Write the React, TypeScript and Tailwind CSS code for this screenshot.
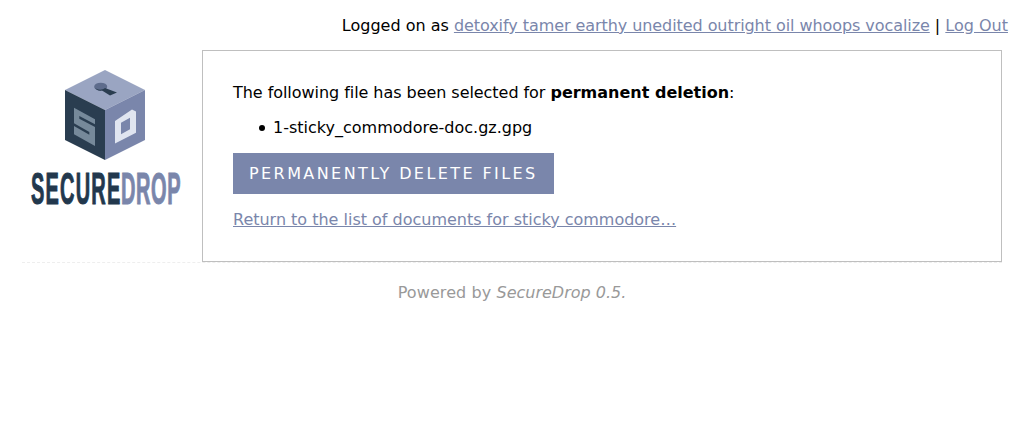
function Logo() {
  return (
    <svg width="160" height="150" viewBox="0 0 160 150" className="block">
      <g transform="translate(-25,-70)">
        <polygon points="105,70 145,90 105,110 65,90" fill="#9aa5c2" />
        <polygon points="65,90 105,110 105,160 65,140" fill="#2a3d50" />
        <polygon points="145,90 105,110 105,160 145,140" fill="#7a86ab" />
        {/* keyhole */}
        <ellipse cx="100.7" cy="86.7" rx="6.5" ry="4" fill="#5e6c8c" />
        <path d="M94.5,87.5 C97,90 102,90.5 105,88 L117,92.5 L110,95.5 L102,90.5 C99,91 96,90 94.5,87.5 Z" fill="#2a3d50" />
        {/* S */}
        <polygon points="74,107.7 95,119.3 95,146 74,134.3" fill="#76899a" />
        <polygon points="79.3,116 95,124.3 95,127 79.3,118.7" fill="#2a3d50" />
        <polygon points="74,123.3 89.3,132 89.3,134.7 74,126" fill="#2a3d50" />
        {/* D */}
        <path fillRule="evenodd" d="M115,121 L132,109.5 L136,111.5 L136,132.7 L115,143.5 Z M121,122.7 L121,134.3 L130,129.3 L130,117.7 Z" fill="#e0e5f0" />
        <text transform="translate(31,204) scale(1,2.2)" fontFamily="'Liberation Sans', sans-serif" fontWeight="700" fontSize="20" letterSpacing="1.2" fill="#22384d" stroke="#22384d" strokeWidth="0.5">SECURE</text>
        <text transform="translate(121,204) scale(1,2.2)" fontFamily="'Liberation Sans', sans-serif" fontWeight="700" fontSize="20" letterSpacing="0.6" fill="#7a86ab" stroke="#7a86ab" strokeWidth="0.5">DROP</text>
      </g>
    </svg>
  );
}

export default function App() {
  return (
    <div className="min-h-[429px] bg-white text-[16px] leading-[22px] text-black font-['DejaVu_Sans',sans-serif]">
      <div className="pt-[15px] pr-4 text-right">
        Logged on as{" "}
        <a href="#" className="text-[#7a86ab] underline tracking-[-0.068px]">detoxify tamer earthy unedited outright oil whoops vocalize</a>
        {" | "}
        <a href="#" className="text-[#7a86ab] underline">Log Out</a>
      </div>

      <div className="flex mt-[13px] ml-[22px] mr-[22px] border-b border-dashed border-[#eeeeee]">
        <div className="w-[180px] h-[212px] pt-5 pl-[3px]">
          <Logo />
        </div>
        <div className="flex-1 h-[212px] border border-[#bfbfbf] pt-[31px] px-[30px]">
          <p><span className="tracking-[-0.05px]">The following file has been selected for </span><strong className="font-bold">permanent deletion</strong>:</p>
          <ul className="list-none pl-10 mt-[13px]">
            <li className="relative before:absolute before:left-[-14px] before:top-[8px] before:size-[6px] before:rounded-full before:bg-black">1-sticky_commodore-doc.gz.gpg</li>
          </ul>
          <button className="block mt-[14px] h-[41px] w-[321px] pl-4 bg-[#7a86ab] text-white text-[16px] tracking-[2.42px] text-left">PERMANENTLY DELETE FILES</button>
          <p className="mt-[15px]">
            <a href="#" className="text-[#7a86ab] underline tracking-[-0.01px]">Return to the list of documents for sticky commodore…</a>
          </p>
        </div>
      </div>

      <p className="mt-[19px] text-center text-[#999999]">
        <span className="tracking-[0.09px]">Powered by </span><em className="italic">SecureDrop 0.5.</em>
      </p>
    </div>
  );
}
